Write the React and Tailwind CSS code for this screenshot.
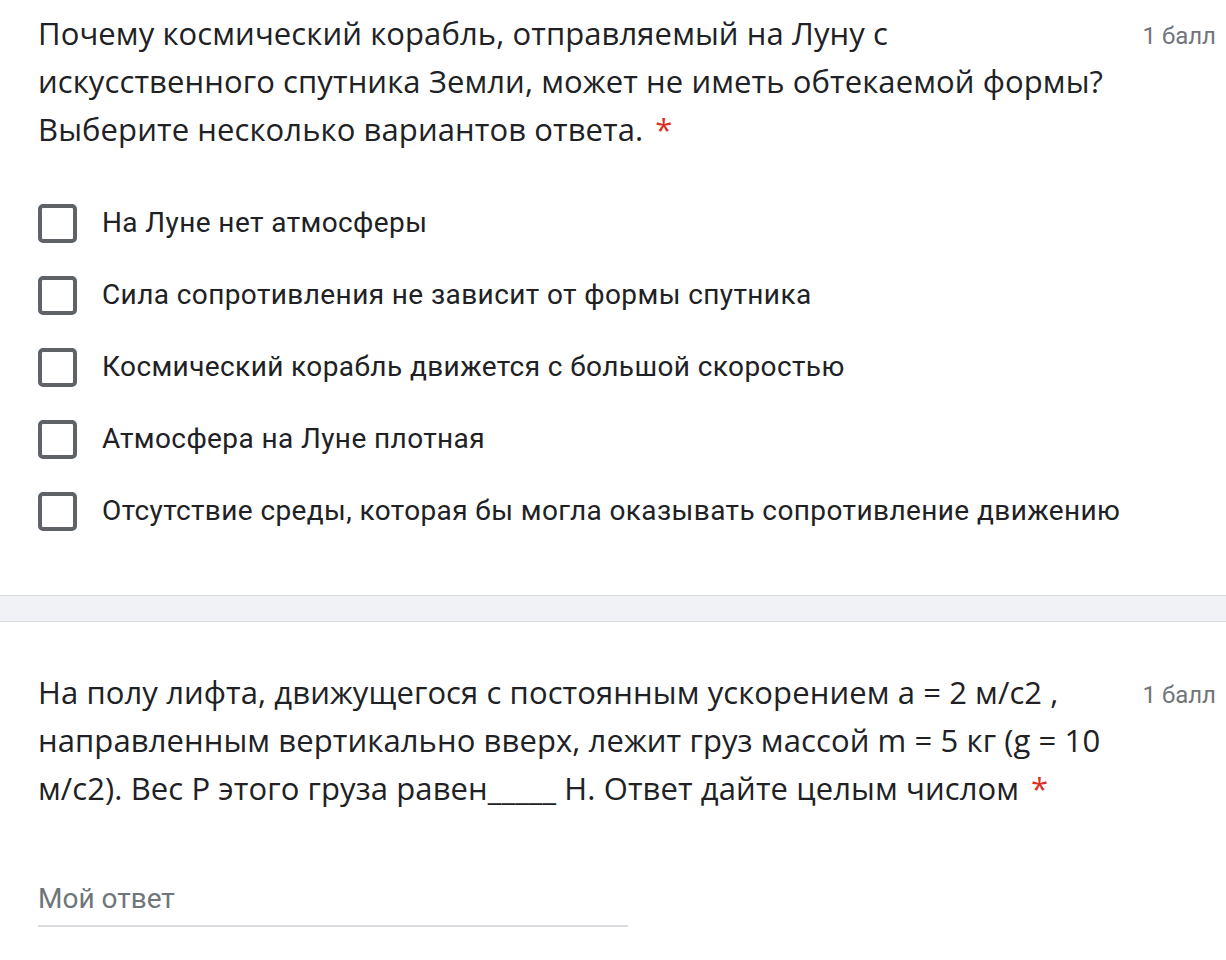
import React from 'react';

const options = [
  'На Луне нет атмосферы',
  'Сила сопротивления не зависит от формы спутника',
  'Космический корабль движется с большой скоростью',
  'Атмосфера на Луне плотная',
  'Отсутствие среды, которая бы могла оказывать сопротивление движению',
];

const titleFont = { fontFamily: '"Open Sans", "Noto Sans", sans-serif' };
const bodyFont = { fontFamily: 'Roboto, "Liberation Sans", sans-serif' };

const Question = ({ lines }) => (
  <div className="flex items-start justify-between pl-[38px] pr-[10px]">
    <div className="-mt-[3px] mb-[3px] text-[31px] leading-[48px] tracking-[0.1px] text-[#202124]" style={titleFont}>
      {lines.map((line, i) => (
        <div key={i} className="whitespace-nowrap">
          {line}
          {i === lines.length - 1 && <span className="text-[#d93025] ml-[12px]">*</span>}
        </div>
      ))}
    </div>
    <div className="text-[24px] leading-[48px] text-[#70757a] whitespace-nowrap" style={bodyFont}>
      1 балл
    </div>
  </div>
);

export default function App() {
  return (
    <div className="w-[1226px] h-[960px] bg-white overflow-hidden">
      {/* Question 1 */}
      <section className="pt-[12px] pb-[48px]">
        <Question
          lines={[
            'Почему космический корабль, отправляемый на Луну с',
            'искусственного спутника Земли, может не иметь обтекаемой формы?',
            'Выберите несколько вариантов ответа.',
          ]}
        />
        <div className="mt-[31px] pl-[38px]">
          {options.map((opt) => (
            <label key={opt} className="flex items-center h-[72px] gap-[25px] cursor-pointer">
              <span className="w-[39px] h-[39px] shrink-0 rounded-[5px] border-[4px] border-[#5f6368]" />
              <span className="text-[28px] tracking-[0.4px] text-[#202124] whitespace-nowrap" style={bodyFont}>
                {opt}
              </span>
            </label>
          ))}
        </div>
      </section>

      {/* Divider band */}
      <div className="h-[27px] bg-[#f0f2f5] border-y border-[#dadce0]" />

      {/* Question 2 */}
      <section className="pt-[49px]">
        <Question
          lines={[
            'На полу лифта, движущегося с постоянным ускорением a = 2 м/с2 ,',
            'направленным вертикально вверх, лежит груз массой m = 5 кг (g = 10',
            'м/с2). Вес Р этого груза равен_____ Н. Ответ дайте целым числом',
          ]}
        />
        <div className="mt-[64px] ml-[38px] w-[590px] h-[48px] border-b-2 border-[#dadce0] flex items-end pb-[10px]">
          <span className="text-[28px] leading-[32px] text-[#70757a]" style={bodyFont}>
            Мой ответ
          </span>
        </div>
      </section>
    </div>
  );
}
